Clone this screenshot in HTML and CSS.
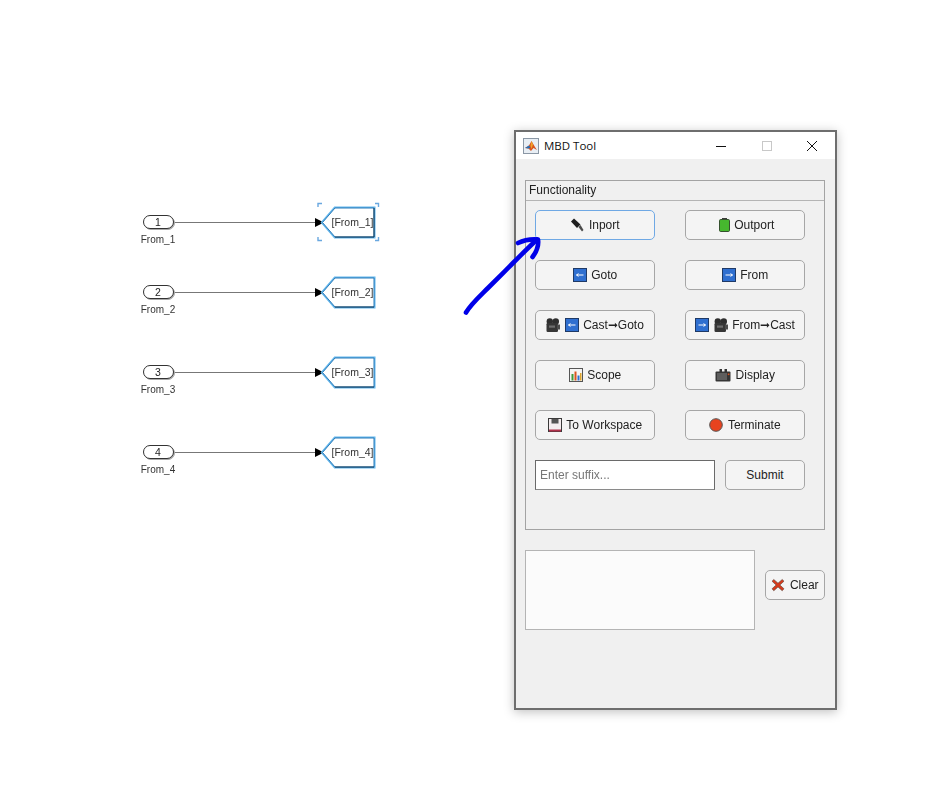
FILE: index.html
```html
<!DOCTYPE html>
<html lang="en">
<head>
    <meta charset="UTF-8">
    <meta name="viewport" content="width=device-width, initial-scale=1.0">
    <title>MBD Tool</title>
    <link rel="stylesheet" href="styles.css">
</head>
<body>
    <svg class="icon-defs" aria-hidden="true">
        <defs>
            <symbol id="arrow-left" viewBox="0 0 14 14">
                <rect x="0.5" y="0.5" width="13" height="13" fill="#2f6fd0" stroke="#1f3a66"/>
                <path d="M3.5 7H10.5M3.5 7L5.5 5.6M3.5 7L5.5 8.4" fill="none" stroke="#fff" stroke-width="1"/>
            </symbol>
            <symbol id="arrow-right" viewBox="0 0 14 14">
                <rect x="0.5" y="0.5" width="13" height="13" fill="#2f6fd0" stroke="#1f3a66"/>
                <path d="M3.5 7H10.5M10.5 7L8.5 5.6M10.5 7L8.5 8.4" fill="none" stroke="#fff" stroke-width="1"/>
            </symbol>
            <symbol id="camera" viewBox="0 0 14 14">
                <circle cx="3.8" cy="3.4" r="3.2" fill="#2e2e2e"/>
                <circle cx="9.8" cy="3.4" r="3.2" fill="#2e2e2e"/>
                <rect x="0.5" y="5" width="11.5" height="9" rx="1.2" fill="#363636"/>
                <rect x="11" y="6.5" width="3" height="5" fill="#4c4c4c"/>
                <rect x="3" y="7.5" width="6" height="2.2" fill="#6e6e6e"/>
            </symbol>
        </defs>
    </svg>

    <svg class="diagram" viewBox="0 0 940 794">
        <g>
            <line class="wire" x1="173" y1="222.5" x2="316" y2="222.5"/>
            <rect class="port" x="143.5" y="215.5" width="30" height="13" rx="6.5"/>
            <text class="port-num" x="158" y="226">1</text>
            <text class="port-name" x="158" y="243">From_1</text>
            <path class="head" d="M315 218L324 222.5L315 227Z"/>
            <path class="block-glow" d="M322.5 222.5L335 208H374V237H335Z"/>
            <path class="block" d="M322.5 222.5L335 208H374V237H335Z"/>
            <path class="block-edge" d="M374 208V237H335"/>
            <text class="block-name" x="352.5" y="226">[From_1]</text>
            <path class="select" d="M318 207V203.5H322M375 203.5H378.5V207M318 237V240.5H322M375 240.5H378.5V237"/>
        </g>
        <g transform="translate(0,70)">
            <line class="wire" x1="173" y1="222.5" x2="316" y2="222.5"/>
            <rect class="port" x="143.5" y="215.5" width="30" height="13" rx="6.5"/>
            <text class="port-num" x="158" y="226">2</text>
            <text class="port-name" x="158" y="243">From_2</text>
            <path class="head" d="M315 218L324 222.5L315 227Z"/>
            <path class="block-glow" d="M322.5 222.5L335 208H374V237H335Z"/>
            <path class="block" d="M322.5 222.5L335 208H374V237H335Z"/>
            <path class="block-edge" d="M335 237H374"/>
            <text class="block-name" x="352.5" y="226">[From_2]</text>
        </g>
        <g transform="translate(0,150)">
            <line class="wire" x1="173" y1="222.5" x2="316" y2="222.5"/>
            <rect class="port" x="143.5" y="215.5" width="30" height="13" rx="6.5"/>
            <text class="port-num" x="158" y="226">3</text>
            <text class="port-name" x="158" y="243">From_3</text>
            <path class="head" d="M315 218L324 222.5L315 227Z"/>
            <path class="block-glow" d="M322.5 222.5L335 208H374V237H335Z"/>
            <path class="block" d="M322.5 222.5L335 208H374V237H335Z"/>
            <path class="block-edge" d="M335 237H374"/>
            <text class="block-name" x="352.5" y="226">[From_3]</text>
        </g>
        <g transform="translate(0,230)">
            <line class="wire" x1="173" y1="222.5" x2="316" y2="222.5"/>
            <rect class="port" x="143.5" y="215.5" width="30" height="13" rx="6.5"/>
            <text class="port-num" x="158" y="226">4</text>
            <text class="port-name" x="158" y="243">From_4</text>
            <path class="head" d="M315 218L324 222.5L315 227Z"/>
            <path class="block-glow" d="M322.5 222.5L335 208H374V237H335Z"/>
            <path class="block" d="M322.5 222.5L335 208H374V237H335Z"/>
            <path class="block-edge" d="M335 237H374"/>
            <text class="block-name" x="352.5" y="226">[From_4]</text>
        </g>
    </svg>

    <div class="window">
        <div class="titlebar">
            <svg class="app-icon" viewBox="0 0 16 16">
                <rect x="0.5" y="0.5" width="15" height="15" fill="#e8eef4" stroke="#8a97a5"/>
                <path d="M2 10L6 7.5L8.5 3L12 9L14 12L10.5 10L8 13L5.5 10.5Z" fill="#d9541e"/>
                <path d="M2 10L6 7.5L7.5 9.5L5.5 10.5Z" fill="#2a6fb5"/>
                <path d="M8.5 3L10 6.5L8.5 11L7.5 8Z" fill="#f0a32a"/>
            </svg>
            <span class="app-title">MBD Tool</span>
            <div class="win-controls">
                <svg class="win-btn" viewBox="0 0 10 10"><path d="M0 5.5H10" stroke="#111" fill="none"/></svg>
                <svg class="win-btn" viewBox="0 0 10 10"><rect x="0.5" y="0.5" width="9" height="9" stroke="#c8c8c8" fill="none"/></svg>
                <svg class="win-btn" viewBox="0 0 10 10"><path d="M0 0L10 10M10 0L0 10" stroke="#111" fill="none"/></svg>
            </div>
        </div>
        <div class="content">
            <div class="panel">
                <div class="panel-title">Functionality</div>
                <div class="panel-grid">
                    <button class="btn btn-focus">
                        <svg class="icon" viewBox="0 0 14 14">
                            <path d="M1 3.5L4 0.5L10.5 6.5L7 10Z" fill="#1e1e1e"/>
                            <path d="M8.5 9L10.5 7L13.5 12L12 13.5Z" fill="#4a4a4a"/>
                        </svg>
                        Inport
                    </button>
                    <button class="btn">
                        <svg class="icon" viewBox="0 0 14 14">
                            <rect x="6" y="0" width="5" height="2" fill="#3c3c3c"/>
                            <rect x="3.5" y="1.5" width="10" height="12" rx="1.2" fill="#46b82e" stroke="#35502e"/>
                        </svg>
                        Outport
                    </button>
                    <button class="btn"><svg class="icon"><use href="#arrow-left"/></svg> Goto</button>
                    <button class="btn"><svg class="icon"><use href="#arrow-right"/></svg> From</button>
                    <button class="btn">
                        <svg class="icon"><use href="#camera"/></svg>
                        <svg class="icon"><use href="#arrow-left"/></svg>
                        Cast➞Goto
                    </button>
                    <button class="btn">
                        <svg class="icon"><use href="#arrow-right"/></svg>
                        <svg class="icon"><use href="#camera"/></svg>
                        From➞Cast
                    </button>
                    <button class="btn">
                        <svg class="icon" viewBox="0 0 14 14">
                            <rect x="0.5" y="0.5" width="13" height="13" fill="#f4f4f4" stroke="#555"/>
                            <rect x="2.5" y="6" width="2" height="6.5" fill="#3f9a3a"/>
                            <rect x="5.5" y="3.5" width="2" height="9" fill="#d9541e"/>
                            <rect x="8.5" y="7.5" width="2" height="5" fill="#2f6fd0"/>
                            <rect x="11" y="5" width="1.5" height="7.5" fill="#e0a52a"/>
                        </svg>
                        Scope
                    </button>
                    <button class="btn">
                        <svg class="icon icon-wide" viewBox="0 0 16 14">
                            <path d="M4.5 1H7V4H4.5ZM9.5 1H12V4H9.5Z" fill="#333"/>
                            <rect x="0.5" y="3.5" width="15" height="10" rx="1" fill="#363636"/>
                            <rect x="2" y="5" width="10" height="7" fill="#5e5e5e"/>
                            <rect x="12.8" y="5.5" width="1.6" height="1.6" fill="#d9541e"/>
                        </svg>
                        Display
                    </button>
                    <button class="btn">
                        <svg class="icon" viewBox="0 0 14 14">
                            <rect x="0.5" y="0.5" width="13" height="13" fill="#f5eef0" stroke="#3a3a3a"/>
                            <rect x="3.5" y="1" width="7" height="4.5" fill="#555"/>
                            <rect x="1" y="11.5" width="12" height="2" fill="#b0304a"/>
                        </svg>
                        To Workspace
                    </button>
                    <button class="btn">
                        <svg class="icon" viewBox="0 0 14 14">
                            <circle cx="7" cy="7" r="6.3" fill="#e8431f" stroke="#555"/>
                        </svg>
                        Terminate
                    </button>
                    <div class="suffix-row">
                        <input class="suffix-input" type="text" placeholder="Enter suffix...">
                        <button class="btn btn-submit">Submit</button>
                    </div>
                </div>
            </div>
            <div class="output-row">
                <textarea class="output"></textarea>
                <button class="btn btn-clear">
                    <svg class="icon" viewBox="0 0 14 14">
                        <path d="M2.8 1.5L7 5.2L11.2 1.5L13 3.2L8.9 7L13 10.8L11.2 12.8L7 8.9L2.8 12.8L1 10.8L5.1 7L1 3.2Z" fill="#d63a1c" stroke="#5a4a40" stroke-width="0.6"/>
                    </svg>
                    Clear
                </button>
            </div>
        </div>
    </div>

    <svg class="annotation" viewBox="0 0 940 794">
        <path d="M466 312.5C471 304 480 296 488 288C497 279 504 272 512 264C520 256 529 247 537 239.5"/>
        <path d="M518 243C524 240 531 239 538 239.5C539 246 537 251 532.5 257"/>
    </svg>
</body>
</html>
```

FILE: styles.css
```css
* {
    box-sizing: border-box;
}

body {
    margin: 0;
    width: 940px;
    height: 794px;
    position: relative;
    overflow: hidden;
    background-color: #fff;
    font-family: "Liberation Sans", Arial, sans-serif;
    color: #222;
}

.icon-defs {
    position: absolute;
    width: 0;
    height: 0;
}

/* free canvas for the model blocks */
.diagram,
.annotation {
    position: absolute;
    left: 0;
    top: 0;
    width: 940px;
    height: 794px;
}

.diagram {
    filter: blur(0.3px);
}

.annotation {
    pointer-events: none;
}

.annotation path {
    fill: none;
    stroke: #0000e8;
    stroke-width: 4.6;
    stroke-linecap: round;
    stroke-linejoin: round;
}

.wire {
    stroke: #777;
    stroke-width: 1;
}

.port {
    fill: #fff;
    stroke: #333;
    stroke-width: 1;
    filter: drop-shadow(1px 1px 0.5px #aaa);
}

.port-num {
    font-size: 10.5px;
    text-anchor: middle;
    fill: #222;
}

.port-name {
    font-size: 10px;
    text-anchor: middle;
    fill: #333;
}

.head {
    fill: #000;
}

.block-glow {
    fill: #fff;
    stroke: #62b6ec;
    stroke-width: 3;
}

.block {
    fill: #fff;
    stroke: #2a7ab8;
    stroke-width: 1;
}

.block-edge {
    fill: none;
    stroke: #123a58;
    stroke-width: 1;
}

.block-name {
    font-size: 10.5px;
    text-anchor: middle;
    fill: #333;
}

.select {
    fill: none;
    stroke: #6aa8e0;
    stroke-width: 1.4;
}

.window {
    position: absolute;
    left: 514px;
    top: 130px;
    width: 323px;
    height: 580px;
    border: 2px solid #6e6e6e;
    background-color: #f0f0f0;
    box-shadow: 0 2px 10px rgba(0, 0, 0, 0.25);
    display: flex;
    flex-direction: column;
    filter: blur(0.25px);
}

.titlebar {
    height: 27px;
    background-color: #fff;
    display: flex;
    align-items: center;
    padding-left: 7px;
}

.app-icon {
    width: 16px;
    height: 16px;
}

.app-title {
    margin-left: 5px;
    margin-top: -1px;
    font-family: "Open Sans", sans-serif;
    font-size: 11.5px;
    color: #111;
}

.win-controls {
    margin-left: auto;
    display: flex;
    gap: 35.5px;
    padding-right: 18px;
}

.win-btn {
    width: 10px;
    height: 10px;
}

.content {
    padding: 21px 10px 0 9px;
}

.panel {
    width: 300px;
    height: 350px;
    border: 1px solid #a3a3a3;
}

.panel-title {
    height: 20px;
    border-bottom: 1px solid #b4b4b4;
    padding-left: 3px;
    font-size: 12px;
    line-height: 18px;
}

.panel-grid {
    padding: 9px;
    display: grid;
    grid-template-columns: 120px 120px;
    grid-auto-rows: 30px;
    column-gap: 30px;
    row-gap: 20px;
}

.btn {
    height: 30px;
    padding: 0;
    border: 1px solid #a6a6a6;
    border-radius: 5px;
    background-color: #f4f4f4;
    font-family: "Liberation Sans", Arial, sans-serif;
    font-size: 12px;
    color: #222;
    display: flex;
    align-items: center;
    justify-content: center;
    gap: 4.5px;
    white-space: nowrap;
}

.btn-focus {
    border-color: #6fa8e4;
}

.icon {
    width: 14px;
    height: 14px;
    flex-shrink: 0;
}

.icon-wide {
    width: 16px;
}

.suffix-row {
    grid-column: 1 / 3;
    display: flex;
    gap: 10px;
}

.suffix-input {
    width: 180px;
    height: 30px;
    padding: 0 4px;
    border: 1px solid #6a6a6a;
    border-bottom-color: #8a8a8a;
    background-color: #fff;
    font-family: "Liberation Sans", Arial, sans-serif;
    font-size: 12px;
}

.suffix-input::placeholder {
    color: #777;
}

.btn-submit {
    width: 80px;
}

.output-row {
    margin-top: 20px;
    display: flex;
    align-items: flex-start;
    gap: 10px;
}

.output {
    width: 230px;
    height: 80px;
    border: 1px solid #b4b4b4;
    background-color: #fbfbfb;
    resize: none;
    display: block;
}

.btn-clear {
    width: 60px;
    margin-top: 20px;
}
```
